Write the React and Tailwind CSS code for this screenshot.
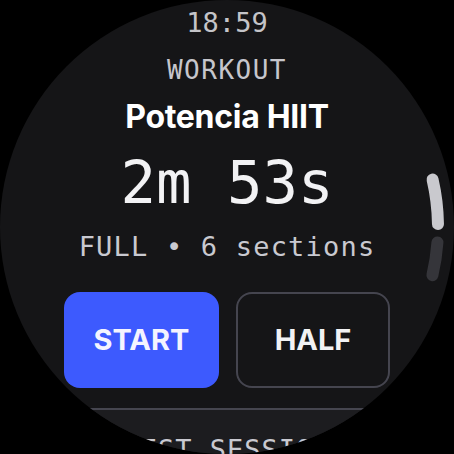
import React from 'react';

const mono = { fontFamily: '"DejaVu Sans Mono", "Liberation Mono", monospace' };

function ScrollIndicator() {
    // arcs along the right edge of the round screen
    const cx = 227;
    const cy = 227;
    const r = 211;
    const pt = (deg) => {
        const a = (deg * Math.PI) / 180;
        return [cx + r * Math.cos(a), cy + r * Math.sin(a)];
    };
    const arc = (from, to) => {
        const [x1, y1] = pt(from);
        const [x2, y2] = pt(to);
        return `M ${x1} ${y1} A ${r} ${r} 0 0 1 ${x2} ${y2}`;
    };
    return (
        <svg className="absolute inset-0 pointer-events-none" width="454" height="454" viewBox="0 0 454 454">
            <path d={arc(-13, -0.8)} stroke="#c9c9ce" strokeWidth="12" strokeLinecap="round" fill="none" />
            <path d={arc(4.2, 13.2)} stroke="#35353a" strokeWidth="12" strokeLinecap="round" fill="none" />
        </svg>
    );
}

export default function App() {
    return (
        <div className="w-[454px] h-[454px] bg-black overflow-hidden">
            <div className="relative w-[454px] h-[454px] rounded-full overflow-hidden bg-[#151517] flex flex-col items-center">
                <div style={mono} className="mt-[6px] text-[27px] leading-[34px] text-[#c4c4c8]">18:59</div>
                <div style={mono} className="mt-[15px] text-[26px] leading-[30px] tracking-[1.5px] text-[#c6c6cc]">WORKOUT</div>
                <div className="mt-[13px] font-['Inter',sans-serif] font-bold text-[32px] leading-[38px] tracking-[-0.3px] text-white">
                    Potencia HIIT
                </div>
                <div style={mono} className="mt-[15px] text-[59px] leading-[64px] text-[#f2f2f4]">2m 53s</div>
                <div style={mono} className="mt-[16px] text-[27px] leading-[32px] tracking-[1.2px] text-[#c9c9d0]">
                    FULL • 6 sections
                </div>
                <div className="mt-[29px] flex gap-[17px]">
                    <button className="w-[155px] h-[96px] rounded-[16px] bg-[#3d5afe] font-['Inter',sans-serif] font-bold text-[29px] text-[#f4f4ff]">
                        START
                    </button>
                    <button className="w-[154px] h-[96px] rounded-[16px] border-2 border-[#45454f] bg-[#151517] font-['Inter',sans-serif] font-bold text-[29px] text-[#f2f2f4]">
                        HALF
                    </button>
                </div>
                <div className="mt-[20px] w-full flex-1 border-t-2 border-[#45454f] bg-[#1c1c1f] flex justify-center">
                    <div style={mono} className="mt-[24px] text-[27px] leading-[32px] tracking-[1px] text-[#c9c9d0]">
                        BEST SESSION
                    </div>
                </div>
                <ScrollIndicator />
            </div>
        </div>
    );
}
